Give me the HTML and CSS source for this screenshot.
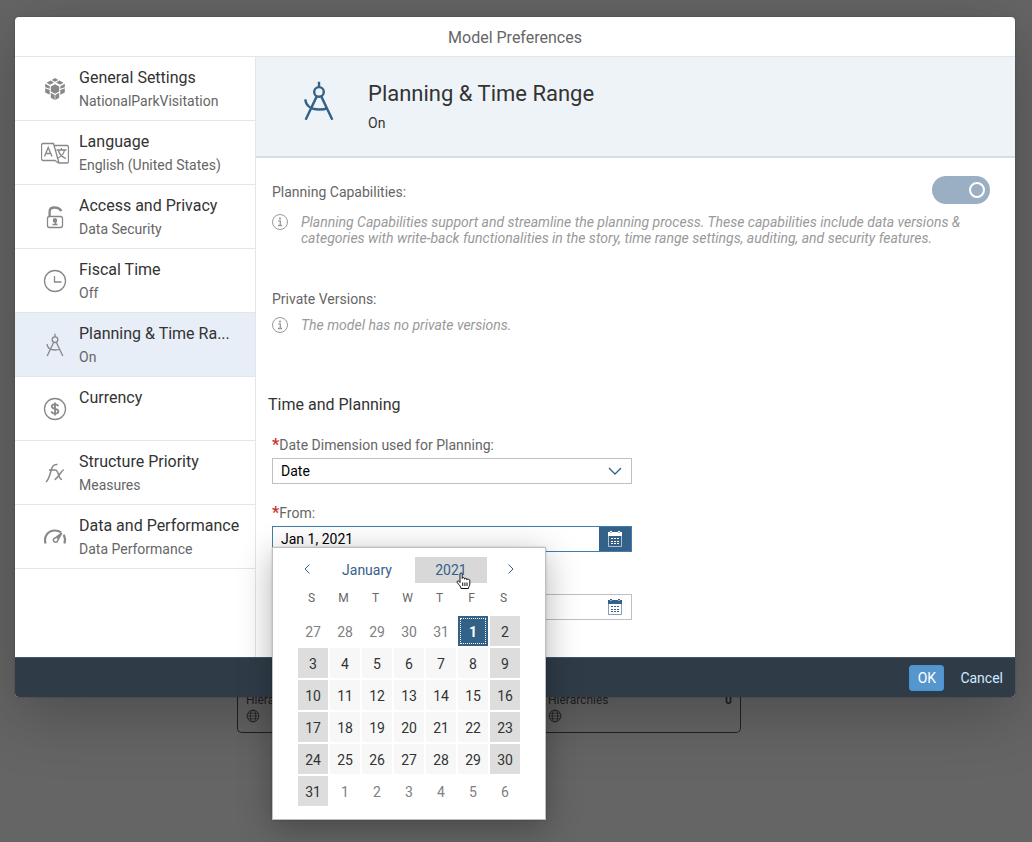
FILE: index.html
```html
<!DOCTYPE html>
<html lang="en">
<head>
<meta charset="utf-8">
<title>Model Preferences</title>
<link rel="stylesheet" href="styles.css">
</head>
<body>
<svg class="defs" aria-hidden="true">
  <symbol id="compass" viewBox="0 0 28 28"><g fill="none" stroke="currentColor"><path d="M14 2.700v3.200M12.700 11.300 6.200 25M15.300 11.300 21.800 25M6 13c.3 3.400 3 6 8 6 2 0 3.800-.3 5.200-1"/><circle cx="14" cy="8.700" r="2.800"/></g></symbol>
  <symbol id="info" viewBox="0 0 16 16"><circle cx="8" cy="8" r="7.500" fill="none" stroke="currentColor"/><path d="M6.300 6.800h2V11.500M6 11.500h4.200" fill="none" stroke="currentColor" stroke-width="1.300"/><circle cx="8" cy="4.500" r="1.100" fill="currentColor"/></symbol>
  <symbol id="calendar" viewBox="0 0 16 16"><path d="M1.500 2.500h13V15.500h-13z" fill="none" stroke="currentColor" stroke-opacity=".6"/><path d="M1 1h2v1h2V1h6v1h2V1h2v4H1z" fill="currentColor"/><path d="M3 0h2v1.500H3zM11 0h2v1.500h-2zM4 7h2v1H4zM7 7h2v1H7zM10 7h2v1h-2zM4 10h2v1H4zM7 10h2v1H7zM10 10h2v1h-2zM4 12h2v1H4zM7 12h2v1H7zM10 12h2v1h-2z" fill="currentColor"/></symbol>
  <symbol id="globe" viewBox="0 0 14 14"><g fill="none" stroke="currentColor" stroke-width=".9"><circle cx="7" cy="7" r="5.900"/><ellipse cx="7" cy="7" rx="2.800" ry="5.900"/><path d="M1 7h12M2 4.300h10M2 9.700h10" stroke-width=".7"/></g></symbol>
</svg>

<div class="canvas">
  <div class="tables">
    <div class="table-card"><span>Hierarchies</span><svg class="globe"><use href="#globe"/></svg></div>
    <div class="table-card"><span class="card-row"><span>Hierarchies</span><b>0</b></span><svg class="globe"><use href="#globe"/></svg></div>
  </div>
</div>

<div class="overlay">
<section class="dialog" role="dialog" aria-labelledby="dialog-title">
  <h1 class="dialog-title" id="dialog-title">Model Preferences</h1>
  <div class="dialog-body">
    <nav class="side">
      <a class="item" href="#general">
        <svg class="item-icon" viewBox="0 0 28 28" fill="currentColor"><path d="M14 9.200l4.200 2.400v4.800L14 18.800l-4.200-2.400v-4.800zM14 3l3.300 1.900L14 6.700l-3.300-1.800zM9.600 5.500l3.300 1.900-4 2.300-3.400-1.900zM18.400 5.500l4.100 2.300-3.400 1.900-4-2.300zM4.200 8.800l4.500 2.500v2.500l-4.500-1.600zM23.800 8.800l-4.500 2.500v2.500l4.500-1.600zM4.200 13.300l4.500 1.800v4.700l-4.500-2.400zM23.800 13.300l-4.500 1.800v4.700l4.500-2.400zM9.800 17.800l3.900 2.100v5l-3.900-2.200zM18.200 17.800l-3.900 2.100v5l3.900-2.200z"/></svg>
        <span class="item-text"><span class="item-title">General Settings</span><span class="item-sub">NationalParkVisitation</span></span></a>
      <a class="item" href="#language">
        <svg class="item-icon" viewBox="0 0 28 28" fill="none" stroke="currentColor"><path d="M14.500 21.500H2A1.500 1.500 0 0 1 .5 20V6A1.500 1.500 0 0 1 2 4.500h10.500l5.500 19.500h8A1.500 1.500 0 0 0 27.500 22.500V8A1.500 1.500 0 0 0 26 6.500H13M14 21.500l3.500 2.500"/><path d="M3.500 17.500 7.200 8.500 11 17.500M4.700 14.500h5M15.500 11h10M20.500 9v2M23.500 11c-.7 4-4 7-7.500 8.500M17.500 11.500c.8 3.500 3.500 6.500 7.500 8" stroke-width="1.300"/></svg>
        <span class="item-text"><span class="item-title">Language</span><span class="item-sub">English (United States)</span></span></a>
      <a class="item" href="#access">
        <svg class="item-icon" viewBox="0 0 28 28" fill="none" stroke="currentColor"><rect x="6.500" y="13.500" width="15" height="11" rx="2"/><path d="M8.600 13V8.500c0-2.700 2.200-4 5-4 3 0 5 .9 6.800 3.500" stroke-width="2.300"/><path d="M12 16.500h2.500v5M11.500 21.500h5" stroke-width="1.500"/><circle cx="14" cy="17.500" r="1.600" fill="currentColor"/></svg>
        <span class="item-text"><span class="item-title">Access and Privacy</span><span class="item-sub">Data Security</span></span></a>
      <a class="item" href="#fiscal">
        <svg class="item-icon" viewBox="0 0 28 28" fill="none" stroke="currentColor"><circle cx="14" cy="14" r="10.500"/><path d="M13.500 9v6h7"/></svg>
        <span class="item-text"><span class="item-title">Fiscal Time</span><span class="item-sub">Off</span></span></a>
      <a class="item selected" href="#planning" aria-current="page">
        <svg class="item-icon"><use href="#compass"/></svg>
        <span class="item-text"><span class="item-title">Planning &amp; Time Ra...</span><span class="item-sub">On</span></span></a>
      <a class="item" href="#currency">
        <svg class="item-icon" viewBox="0 0 28 28" fill="none" stroke="currentColor"><circle cx="14" cy="14" r="10.500"/><path d="M17.200 11.300c-.3-1.300-1.500-2-3.200-2-2 0-3.200.9-3.200 2.300 0 3.200 6.600 1.400 6.600 4.700 0 1.500-1.400 2.400-3.400 2.400-1.900 0-3.200-.8-3.500-2.300M14 7.500v13" stroke-width="1.800"/></svg>
        <span class="item-text"><span class="item-title">Currency</span></span></a>
      <a class="item" href="#structure">
        <svg class="item-icon" viewBox="0 0 28 28" fill="none" stroke="currentColor"><path d="M5 23c2.500-2 3.500-6 4.800-10.500C11 8 12 5 16.500 5.500M8 11h7.500M14.500 11c3 0 3 9.500 6.500 9.500M22.800 11c-2.500 0-6.500 9.500-9.300 9.500" stroke-width="1.500"/></svg>
        <span class="item-text"><span class="item-title">Structure Priority</span><span class="item-sub">Measures</span></span></a>
      <a class="item" href="#performance">
        <svg class="item-icon" viewBox="0 0 28 28" fill="none" stroke="currentColor"><path d="M4.500 20.500C2.500 13 7.500 7.500 14 7.500c2.500 0 4.500.7 6 1.800M22.700 11.800c1.400 2.500 1.700 5.500.8 8.700" stroke-width="2.200"/><path d="M20.800 10 14 15a2.200 2.200 0 1 0 2.800 2.400z" stroke-width="1.500"/><path d="M20.500 10.300 16 15.500" stroke-width="2"/></svg>
        <span class="item-text"><span class="item-title">Data and Performance</span><span class="item-sub">Data Performance</span></span></a>
    </nav>

    <main class="panel">
      <header class="panel-head">
        <svg class="panel-icon"><use href="#compass"/></svg>
        <div><h2 class="panel-title">Planning &amp; Time Range</h2><p class="panel-state">On</p></div>
      </header>
      <div class="content">
        <div class="setting-row">
          <label for="planning">Planning Capabilities:</label>
          <input class="switch" id="planning" type="checkbox" role="switch" checked disabled>
        </div>
        <p class="hint hint-long"><svg class="info"><use href="#info"/></svg><span>Planning Capabilities support and streamline the planning process. These capabilities include data versions &amp;<br>categories with write-back functionalities in the story, time range settings, auditing, and security features.</span></p>
        <p class="label">Private Versions:</p>
        <p class="hint"><svg class="info"><use href="#info"/></svg><span>The model has no private versions.</span></p>
        <h3 class="section-title">Time and Planning</h3>
        <div class="fields">
        <div class="field">
          <label for="dimension"><b class="required">*</b>Date Dimension used for Planning:</label>
          <div class="control"><select id="dimension"><option>Date</option></select><svg class="chevron" viewBox="0 0 14 8"><path d="M1 1l6 6 6-6"/></svg></div>
        </div>
        <div class="field">
          <label for="from"><b class="required">*</b>From:</label>
          <div class="control active"><input id="from" type="text" value="Jan 1, 2021"><button class="open" type="button" aria-label="Open picker"><svg class="cal"><use href="#calendar"/></svg></button></div>
          <div class="picker">
            <div class="picker-head">
              <button class="arrow" type="button" aria-label="Previous"><svg viewBox="0 0 6 10"><path d="M5.500.5 1 5l4.500 4.500"/></svg></button>
              <button class="period" type="button">January</button>
              <button class="period hovered" type="button">2021<svg class="pointer" viewBox="0 0 15 17"><path d="M4 9V2c0-1.500 2.200-1.500 2.200 0v4.500c0-1.200 2.300-1.200 2.300 0v.7c0-1.200 2.300-1.200 2.300.1v.7c0-1.200 3-1 3 .3V12c0 2-1.300 2.500-1.300 4.500H5c0-2-2-3.500-3.800-6C.5 9 2.500 8 4 10.500z"/><path d="M6.700 10.500v3.500M8.900 10.500v3.500M11 10.500v3.500"/></svg></button>
              <button class="arrow" type="button" aria-label="Next"><svg viewBox="0 0 6 10"><path d="M.5.5 5 5 .5 9.500"/></svg></button>
            </div>
            <table class="days">
              <thead><tr><th>S</th><th>M</th><th>T</th><th>W</th><th>T</th><th>F</th><th>S</th></tr></thead>
              <tbody>
                <tr><td class="other"><button>27</button></td><td class="other"><button>28</button></td><td class="other"><button>29</button></td><td class="other"><button>30</button></td><td class="other"><button>31</button></td><td class="chosen"><button>1</button></td><td><button>2</button></td></tr>
                <tr><td><button>3</button></td><td><button>4</button></td><td><button>5</button></td><td><button>6</button></td><td><button>7</button></td><td><button>8</button></td><td><button>9</button></td></tr>
                <tr><td><button>10</button></td><td><button>11</button></td><td><button>12</button></td><td><button>13</button></td><td><button>14</button></td><td><button>15</button></td><td><button>16</button></td></tr>
                <tr><td><button>17</button></td><td><button>18</button></td><td><button>19</button></td><td><button>20</button></td><td><button>21</button></td><td><button>22</button></td><td><button>23</button></td></tr>
                <tr><td><button>24</button></td><td><button>25</button></td><td><button>26</button></td><td><button>27</button></td><td><button>28</button></td><td><button>29</button></td><td><button>30</button></td></tr>
                <tr><td><button>31</button></td><td class="other"><button>1</button></td><td class="other"><button>2</button></td><td class="other"><button>3</button></td><td class="other"><button>4</button></td><td class="other"><button>5</button></td><td class="other"><button>6</button></td></tr>
              </tbody>
            </table>
          </div>
        </div>
        <div class="field">
          <div class="label-space"></div>
          <div class="control"><input type="text" aria-label="End date"><button class="open" type="button" aria-label="Open picker"><svg class="cal"><use href="#calendar"/></svg></button></div>
        </div>
        </div>
      </div>
    </main>
  </div>
  <footer class="dialog-foot"><button class="ok" type="button">OK</button><button class="cancel" type="button">Cancel</button></footer>
</section>
</div>
</body>
</html>
```
FILE: styles.css
```css
*, *::before { box-sizing: border-box; }
body { margin: 0; min-height: 100vh; background: #656565; color: #333; font: 14px/20px Roboto, "Liberation Sans", sans-serif; }
h1, h2, h3, p { margin: 0; font-weight: 400; }
button { margin: 0; padding: 0; border: 0; background: none; color: inherit; font: inherit; cursor: pointer; }
svg { display: block; flex: none; }
.defs { position: absolute; width: 0; height: 0; }

.canvas { padding: 600px 291px 0 237px; color: #222; font-size: 12px; }
.tables { display: grid; grid-template-columns: 1fr 1fr; }
.table-card { height: 133px; padding: 0 8px 9px; display: flex; flex-direction: column; justify-content: flex-end; border: 1px solid #222; border-left-width: 0; border-radius: 0 0 5px 0; line-height: 18px; }
.table-card:first-child { border-width: 1px 0 1px 1px; border-radius: 0 0 0 5px; }
.table-card:last-child { padding-left: 59px; }
.card-row { display: flex; justify-content: space-between; }
.globe { width: 14px; height: 14px; }

.overlay { position: absolute; inset: 0; padding: 17px 17px 17px 15px; }
.dialog { display: flex; flex-direction: column; border-radius: 4px; background: #fff; box-shadow: 0 0 2px rgba(0, 0, 0, .3), 0 16px 64px rgba(0, 0, 0, .25); }
.dialog-title { padding: 11px 0 8px; border-bottom: 1px solid #e5e5e5; color: #666; font-size: 16px; line-height: 20px; text-align: center; }
.dialog-body { display: flex; min-height: 600px; }
.side { flex: 0 0 241px; border-right: 1px solid #e5e5e5; }
.item { display: flex; align-items: flex-start; gap: 10px; height: 64px; padding: 11px 8px 0 26px; border-bottom: 1px solid #e5e5e5; color: #333; text-decoration: none; }
.item.selected { background: #e7eef7; }
.item-icon { width: 28px; height: 28px; margin-top: 7px; color: #888; stroke-width: 1.3; }
.item-text { display: flex; flex-direction: column; gap: 3px; white-space: nowrap; }
.item-title { font-size: 16px; }
.item-sub { color: #666; }

.panel { flex: 1; min-width: 0; }
.panel-head { display: flex; gap: 25px; padding: 20px 0 20px 39px; border-bottom: 2px solid #cfdfee; background: #eef3f8; }
.panel-icon { width: 48px; height: 48px; color: #346187; stroke-width: 1.4; }
.panel-title { margin-top: 1px; font-size: 22px; line-height: 32px; }
.panel-state { line-height: 26px; }
.content { padding: 18px 25px 37px 16px; color: #666; }
.setting-row { display: flex; justify-content: space-between; align-items: center; height: 28px; line-height: 24px; }
.setting-row label { padding-top: 4px; }
.switch { appearance: none; width: 58px; height: 28px; margin: 0; padding: 6px 5px; border-radius: 14px; background: #9aafc3; display: flex; justify-content: flex-end; }
.switch::before { content: ""; width: 16px; height: 16px; border: 2px solid #fff; border-radius: 50%; }
.hint { display: flex; gap: 13px; color: #999; font-style: italic; line-height: 16px; white-space: nowrap; }
.hint-long { margin: 10px 0 43px; }
.info { width: 16px; height: 16px; }
.label { margin-bottom: 8px; }
.section-title { margin: 62px 0 20px -4px; color: #333; font-size: 16px; line-height: 20px; }
.fields { display: flex; flex-direction: column; gap: 19px; }
.field { position: relative; width: 360px; }
.field > label, .label-space { display: block; height: 23px; }
.required { color: #c33; font-size: 16px; }
.control { display: flex; align-items: center; height: 26px; border: 1px solid #bfbfbf; background: #fff; }
.control.active { border-color: #427cac; }
.control input, .control select { appearance: none; flex: 1; min-width: 0; height: 24px; padding: 0 8px; border: 0; outline: 0; background: none; color: #000; font: inherit; }
.chevron { width: 14px; height: 8px; margin-right: 9px; fill: none; stroke: #346187; stroke-width: 1.3; }
.open { display: flex; align-items: center; justify-content: center; width: 32px; height: 24px; color: #346187; }
.active .open { background: #346187; color: #fff; }
.cal { width: 16px; height: 16px; }

.picker { position: absolute; z-index: 2; top: 44px; left: 0; width: 274px; padding: 9px 22px 11px; border: 1px solid #bfbfbf; background: #fff; box-shadow: 0 0 2px rgba(0, 0, 0, .2), 0 8px 32px rgba(0, 0, 0, .3); }
.picker-head { display: flex; justify-content: space-between; height: 26px; margin-bottom: 1px; color: #346187; }
.arrow { display: flex; align-items: center; justify-content: center; width: 24px; height: 24px; }
.arrow svg { width: 6px; height: 10px; fill: none; stroke: currentColor; }
.period { position: relative; width: 72px; }
.hovered { background: #d8d8d8; }
.pointer { position: absolute; top: 15px; left: 41px; width: 15px; height: 17px; fill: #fff; stroke: #111; }
.days { margin: 0 auto; border-spacing: 2px; line-height: 30px; text-align: center; }
.days th { height: 28px; padding: 0 3px 0 0; font-size: 12px; font-weight: 400; line-height: 24px; vertical-align: top; }
.days td { width: 30px; height: 30px; padding: 0; background: #f7f7f7; color: #333; }
.days td:first-child, .days td:last-child { background: #ddd; }
.days td.other { background: none; color: #808080; }
.days td.chosen { background: #346187; color: #fff; font-weight: 700; }
.days button { display: block; width: 30px; height: 30px; padding-top: 2px; line-height: 28px; }
.chosen button { outline: 1px dotted #fff; outline-offset: -3px; }

.dialog-foot { display: flex; justify-content: flex-end; align-items: center; gap: 8px; height: 40px; padding-right: 4px; border-top: 1px solid #45566a; border-radius: 0 0 4px 4px; background: #2f3c48; text-shadow: 0 0 2px #000; }
.ok, .cancel { height: 26px; border-radius: 3px; }
.ok { width: 35px; border: 1px solid #4795d6; background: #5496cd; color: #fff; }
.cancel { padding: 0 8px; color: #d1e8ff; }
```
